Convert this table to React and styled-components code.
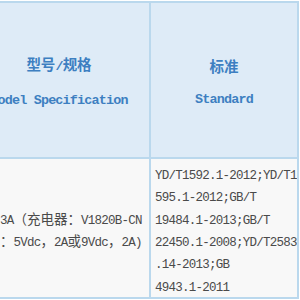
import React from "react";
import styled, { createGlobalStyle } from "styled-components";

const GlobalStyle = createGlobalStyle`
  html, body {
    margin: 0;
    padding: 0;
    background: #ffffff;
    overflow: hidden;
  }
`;

const Page = styled.div`
  width: 300px;
  height: 300px;
  overflow: hidden;
  padding-top: 1px;
  box-sizing: border-box;
`;

const Table = styled.div`
  display: grid;
  grid-template-columns: 180px 146px;
  grid-template-rows: 154px 138px;
  gap: 2px;
  margin-left: -33px;
  width: max-content;
  background: #bad8ed;
  border: 2px solid #bad8ed;
  font-family: "Noto Sans CJK SC", sans-serif;
`;

const HeadCell = styled.div`
  background: #deebf7;
  color: #3d7fc1;
  font-size: 14.5px;
  font-weight: bold;
  line-height: 22px;
  display: flex;
  flex-direction: column;
  align-items: center;
  justify-content: center;
  gap: 9px;
  padding-top: 5px;
  box-sizing: border-box;
  white-space: nowrap;
`;

const BodyCell = styled.div`
  background: #f8f8f8;
  color: #4a4a4a;
  font-size: 13.5px;
  line-height: 22.4px;
  display: flex;
  flex-direction: column;
  justify-content: center;
  padding: 2px 0 0 ${({ $pad }) => $pad}px;
  box-sizing: border-box;
  white-space: nowrap;
  overflow: hidden;
`;

const Line = styled.div`
  height: 22.4px;
`;

// half-width latin, a touch taller than a plain 0.6em mono would give
const Lt = styled.span`
  font-family: "Liberation Mono", monospace;
  font-size: 0.926em;
  letter-spacing: -0.06em;
`;

const Mixed = ({ text }) => {
  const runs = text.match(/[\x20-\x7e]+|[^\x20-\x7e]+/g) || [];
  return runs.map((r, i) =>
    /^[\x20-\x7e]/.test(r) ? <Lt key={i}>{r}</Lt> : <span key={i}>{r}</span>
  );
};

const standards = [
  "YD/T1592.1-2012;YD/T1",
  "595.1-2012;GB/T",
  "19484.1-2013;GB/T",
  "22450.1-2008;YD/T2583",
  ".14-2013;GB",
  "4943.1-2011",
];

const App = () => (
  <Page>
    <GlobalStyle />
    <Table>
      <HeadCell>
        <div>
          <Mixed text="型号/规格" />
        </div>
        <div>
          <Mixed text="Model Specification" />
        </div>
      </HeadCell>
      <HeadCell>
        <div>标准</div>
        <div>
          <Mixed text="Standard" />
        </div>
      </HeadCell>
      <BodyCell $pad={4}>
        <Line>
          <Mixed text="；0.3A（充电器：V1820B-CN" />
        </Line>
        <Line>
          <Mixed text="输出：5Vdc，2A或9Vdc，2A)" />
        </Line>
      </BodyCell>
      <BodyCell $pad={4}>
        {standards.map((s) => (
          <Line key={s}>
            <Lt>{s}</Lt>
          </Line>
        ))}
      </BodyCell>
    </Table>
  </Page>
);

export default App;
